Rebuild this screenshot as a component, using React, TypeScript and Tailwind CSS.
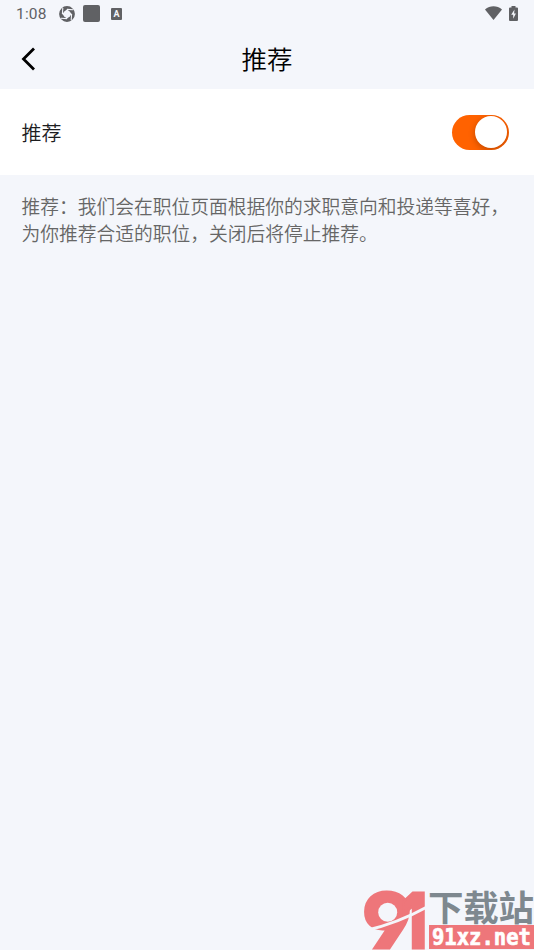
function StatusBar() {
  return (
    <div className="flex h-7 items-center justify-between pl-4 pr-4 text-[#606164]">
      <div className="flex items-center">
        <span className="w-[43px] font-[Roboto,sans-serif] text-[15.5px] font-normal leading-7 tracking-[0.2px]">1:08</span>
        <svg className="mb-px size-4" viewBox="0 0 16 16">
          <circle cx="8" cy="8" r="5.7" fill="none" stroke="currentColor" strokeWidth="4.4" />
          <path d="M8 3.2 12.8 8 8 12.8 3.2 8Z" fill="#f4f6fb" />
          <path d="M8 3.4 14 3.8M12.6 8 12.2 14M8 12.6 2 12.2M3.4 8 3.8 2" stroke="#f4f6fb" strokeWidth="1.1" />
        </svg>
        <span className="mb-px ml-2 size-[17px] rounded-[2px] bg-[#606164]" />
        <span className="mb-px ml-[11px] flex h-3 w-[11px] items-center justify-center rounded-[1px] bg-[#606164] font-[Roboto,sans-serif] text-[9px] font-bold leading-3 text-[#f4f6fb]">
          A
        </span>
      </div>
      <div className="flex items-center gap-[7px] pb-0.5">
        <svg className="h-[14px] w-[17px]" viewBox="0 0 17 14" fill="currentColor">
          <path d="M0 3.5C5-.8 12-.8 17 3.5L8.5 14Z" />
        </svg>
        <svg className="h-[15px] w-[9px]" viewBox="0 0 9 15" fill="currentColor">
          <path d="M2.5 0H6.5V1.5H8Q9 1.5 9 2.5V14Q9 15 8 15H1Q0 15 0 14V2.5Q0 1.5 1 1.5H2.5Z" />
          <path d="M5.5 3.5 2.2 8.7H4.2V12.8L6.9 7.5H5.1Z" fill="#f4f6fb" />
        </svg>
      </div>
    </div>
  );
}

function Switch() {
  return (
    <button
      type="button"
      role="switch"
      aria-checked="true"
      aria-label="推荐"
      className="flex h-[35px] w-[57px] items-center justify-end overflow-hidden rounded-full bg-[#ff6200] pr-[1.5px]"
    >
      <span className="size-8 rounded-full bg-white shadow-[0_2px_6px_rgba(0,0,0,0.25)]" />
    </button>
  );
}

function Watermark() {
  return (
    <svg className="absolute bottom-0 right-0 h-[62px] w-[172px]" viewBox="0 0 172 62">
      <g fill="#ee767a" stroke="#ee767a" strokeWidth="3" fontFamily="Inter, sans-serif" fontWeight="900">
        <text transform="translate(1 60) scale(0.98 1)" fontSize="76" style={{ fontFeatureSettings: '"cv04"' }}>9</text>
        <text transform="translate(39.5 60) scale(0.72 1)" fontSize="76">1</text>
      </g>
      <circle cx="25.7" cy="24.3" r="9.5" fill="#f4f6fb" />
      <path d="M4 42.5Q36 35 65 19" fill="none" stroke="#f4f6fb" strokeWidth="3" />
      <text
        x="66"
        y="32.5"
        fill="#7e888f"
        fontFamily="'Noto Sans CJK SC', sans-serif"
        fontWeight="700"
        fontSize="35.5"
        textLength="106"
      >
        下载站
      </text>
      <rect x="67" y="37" width="105" height="24" fill="#ee767a" />
      <text
        x="70"
        y="57"
        fill="#ffffff"
        fontFamily="'DejaVu Sans Mono', monospace"
        fontWeight="700"
        fontSize="23"
        textLength="99"
        lengthAdjust="spacingAndGlyphs"
        stroke="#ffffff"
        strokeWidth="0.7"
      >
        91xz.net
      </text>
    </svg>
  );
}

export default function App() {
  return (
    <div className="relative flex h-[950px] w-[534px] flex-col overflow-hidden bg-[#f4f6fb] font-['Noto_Sans_CJK_SC',sans-serif] font-[350]">
      <StatusBar />

      {/* Title bar */}
      <header className="grid h-[61px] grid-cols-[80px_1fr_80px] items-center">
        <button type="button" aria-label="返回" className="pl-[21px]">
          <svg className="h-6 w-4" viewBox="0 0 16 24" fill="none" stroke="#000" strokeWidth="2.8">
            <path d="M13 1.5 2.5 12 13 22.5" />
          </svg>
        </button>
        <h1 className="pb-0.5 text-center text-[25.5px] leading-[59px] text-black">推荐</h1>
      </header>

      {/* Setting row */}
      <div className="flex h-[86px] items-center justify-between bg-white pl-[21.5px] pr-[25.5px]">
        <span className="pt-0.5 text-[20px] text-[#1d1d1f]">推荐</span>
        <Switch />
      </div>

      <p className="px-[21.5px] pt-[18px] text-[18.75px] leading-[26.6px] text-[#666666]">
        推荐：我们会在职位页面根据你的求职意向和投递等喜好，
        <br />
        为你推荐合适的职位，关闭后将停止推荐。
      </p>

      <Watermark />
    </div>
  );
}
